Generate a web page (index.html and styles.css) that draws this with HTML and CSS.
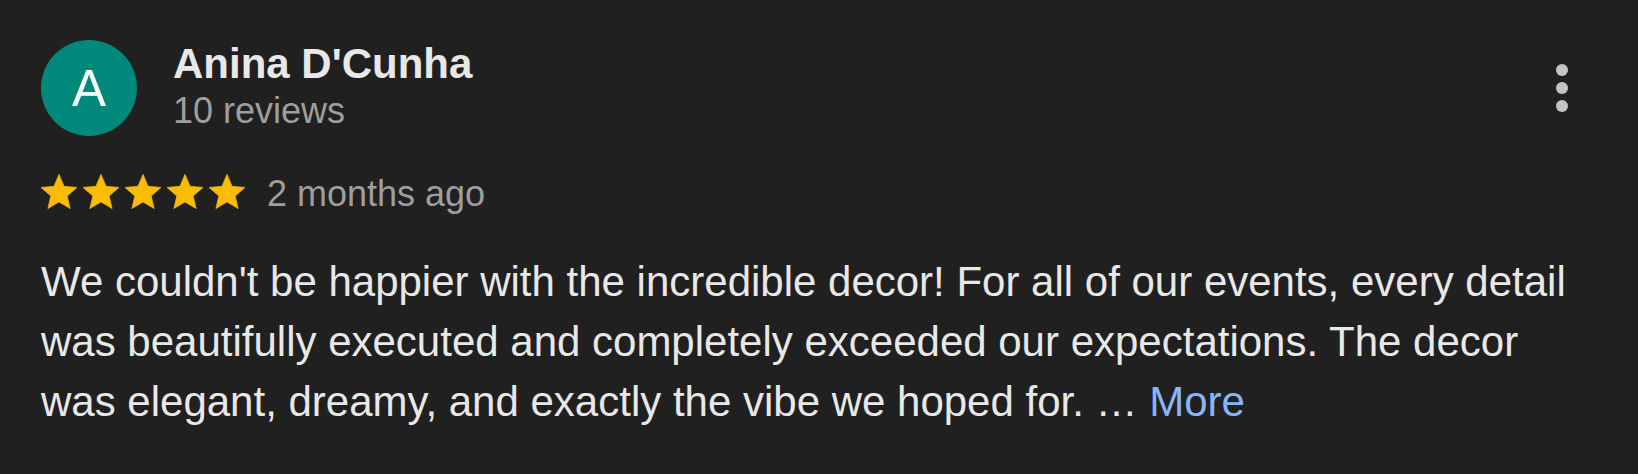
FILE: index.html
```html
<!DOCTYPE html>
<html lang="en">
<head>
  <meta charset="UTF-8" />
  <meta name="viewport" content="width=device-width, initial-scale=1.0" />
  <title>Review</title>
  <link rel="stylesheet" href="styles.css">
</head>
<body>
  <div class="review">
    <div class="review-header">
      <div class="avatar">A</div>
      <div class="author">
        <div class="author-name">Anina D'Cunha</div>
        <div class="author-meta">10 reviews</div>
      </div>
      <div class="menu-btn" title="More options">
        <span class="dot"></span>
        <span class="dot"></span>
        <span class="dot"></span>
      </div>
    </div>
    <div class="rating-row">
      <div class="stars">
        <svg class="star" viewBox="2 2 20 19"><path d="M12 17.27L18.18 21l-1.64-7.03L22 9.24l-7.19-.61L12 2 9.19 8.63 2 9.24l5.46 4.73L5.82 21z"/></svg>
        <svg class="star" viewBox="2 2 20 19"><path d="M12 17.27L18.18 21l-1.64-7.03L22 9.24l-7.19-.61L12 2 9.19 8.63 2 9.24l5.46 4.73L5.82 21z"/></svg>
        <svg class="star" viewBox="2 2 20 19"><path d="M12 17.27L18.18 21l-1.64-7.03L22 9.24l-7.19-.61L12 2 9.19 8.63 2 9.24l5.46 4.73L5.82 21z"/></svg>
        <svg class="star" viewBox="2 2 20 19"><path d="M12 17.27L18.18 21l-1.64-7.03L22 9.24l-7.19-.61L12 2 9.19 8.63 2 9.24l5.46 4.73L5.82 21z"/></svg>
        <svg class="star" viewBox="2 2 20 19"><path d="M12 17.27L18.18 21l-1.64-7.03L22 9.24l-7.19-.61L12 2 9.19 8.63 2 9.24l5.46 4.73L5.82 21z"/></svg>
      </div>
      <span class="review-date">2 months ago</span>
    </div>
    <p class="review-text">We couldn't be happier with the incredible decor! For all of our events, every detail was beautifully executed and completely exceeded our expectations. The decor<br>was elegant, dreamy, and exactly the vibe we hoped for. … <a class="more-link" href="#">More</a></p>
  </div>
</body>
</html>
```

FILE: styles.css
```css
* {
  box-sizing: border-box;
}
body {
  margin: 0;
  background: #202020;
  font-family: 'Liberation Sans', Arial, sans-serif;
  color: #e8e8e8;
}
.review {
  padding: 40px 70px 0 41px;
}
.review-header {
  display: flex;
  align-items: flex-start;
}
.avatar {
  width: 96px;
  height: 96px;
  border-radius: 50%;
  background: #00897b;
  color: #ffffff;
  font-size: 51px;
  display: flex;
  align-items: center;
  justify-content: center;
  flex-shrink: 0;
}
.author {
  margin-left: 36px;
}
.author-name {
  font-size: 42px;
  font-weight: bold;
  line-height: 47px;
  color: #e8e8e8;
}
.author-meta {
  font-size: 36px;
  line-height: 47px;
  color: #9e9e9e;
}
.menu-btn {
  margin-left: auto;
  margin-top: 24px;
  display: flex;
  flex-direction: column;
  gap: 6px;
  cursor: pointer;
}
.dot {
  width: 12px;
  height: 12px;
  border-radius: 50%;
  background: #c4c4c4;
}
.rating-row {
  display: flex;
  align-items: flex-start;
  margin-top: 35px;
}
.stars {
  display: flex;
  gap: 6px;
  margin-top: 3px;
}
.star {
  width: 36px;
  height: 35px;
  fill: #fbbc04;
  stroke: #fbbc04;
  stroke-width: 0.4;
  stroke-linejoin: round;
}
.review-date {
  margin-left: 22px;
  font-size: 36px;
  line-height: 45px;
  color: #9e9e9e;
}
.review-text {
  margin: 36px 0 0;
  font-size: 42px;
  line-height: 60px;
  color: #e8e8e8;
}
.more-link {
  color: #8ab4f8;
  text-decoration: none;
}
```
